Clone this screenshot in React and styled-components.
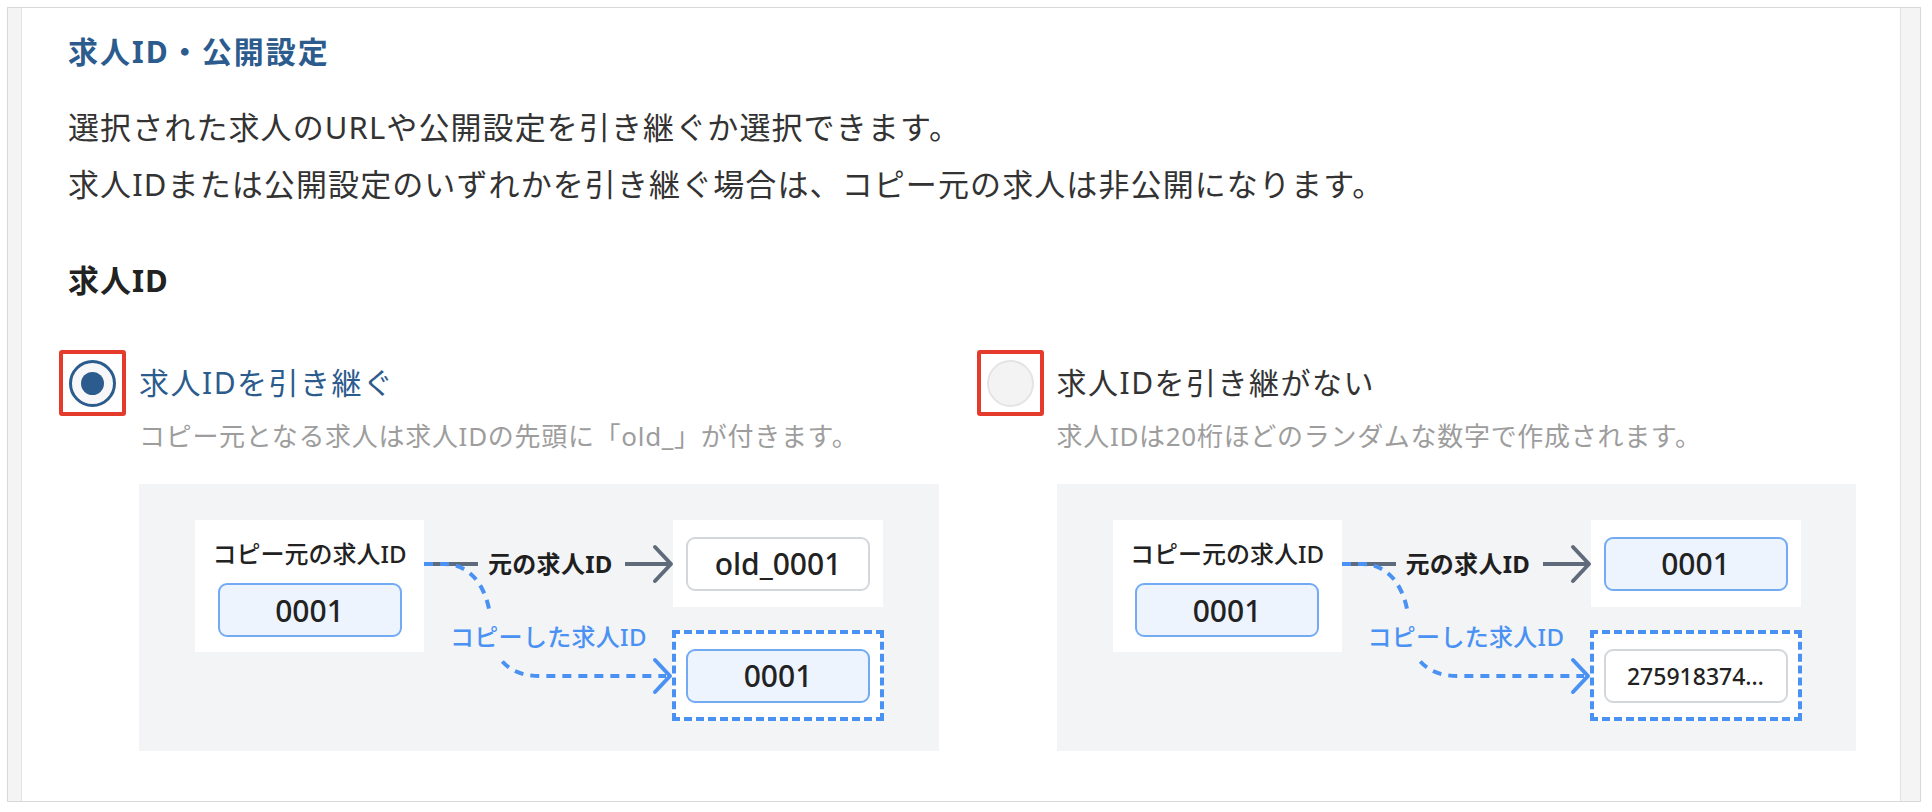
import React from "react";
import styled, { createGlobalStyle } from "styled-components";

const GlobalStyle = createGlobalStyle`
  body {
    margin: 0;
    background: #ffffff;
    font-family: "Noto Sans", "Noto Sans CJK JP", sans-serif;
    color: #333333;
  }
`;

const Frame = styled.div`
  margin: 7px 0 0 7px;
  width: 1914px;
  box-sizing: border-box;
  border: 1px solid #d8d8d8;
  background: #f4f4f4;
  padding: 0 19px 0 13px;
  display: flex;
`;

const Sheet = styled.section`
  flex: 1;
  background: #ffffff;
  border-left: 1px solid #e3e3e3;
  border-right: 1px solid #e3e3e3;
  padding: 22px 44px 50px 46px;
`;

const Heading = styled.h2`
  margin: 0;
  font-size: 30px;
  line-height: 44px;
  font-weight: 700;
  letter-spacing: 2px;
  color: #2c5b8d;
`;

const Lead = styled.p`
  margin: 25px 0 0;
  font-size: 31px;
  line-height: 57px;
  letter-spacing: 1.1px;
  color: #333333;
`;

const SubHeading = styled.h3`
  margin: 45px 0 0;
  font-size: 31px;
  line-height: 44px;
  font-weight: 700;
  letter-spacing: 1px;
  color: #222222;
`;

const Options = styled.div`
  margin: 48px 0 0 -9px;
  display: grid;
  grid-template-columns: 1fr 1fr;
  column-gap: 38px;
`;

const Option = styled.div`
  display: grid;
  grid-template-columns: 67px 1fr;
  column-gap: 13px;
  align-items: center;
`;

const RadioMark = styled.div`
  width: 67px;
  height: 66px;
  box-sizing: border-box;
  border: 4px solid #e53b2c;
  border-radius: 3px;
  display: flex;
  align-items: center;
  justify-content: center;
`;

const RadioCircle = styled.span`
  width: 47px;
  height: 47px;
  box-sizing: border-box;
  border-radius: 50%;
  border: ${p => (p.checked ? "3px solid #2c5b8d" : "2px solid #e4e4e4")};
  background: ${p => (p.checked ? "#f7f7f9" : "#f3f3f3")};
  display: flex;
  align-items: center;
  justify-content: center;

  &::after {
    content: "";
    display: ${p => (p.checked ? "block" : "none")};
    width: 23px;
    height: 23px;
    border-radius: 50%;
    background: #2c5b8d;
  }
`;

const OptionLabel = styled.span`
  font-size: 30px;
  line-height: 66px;
  letter-spacing: 1.5px;
  color: ${p => (p.checked ? "#2c5b8d" : "#333333")};
`;

const OptionNote = styled.div`
  grid-column: 2;
  font-size: 26px;
  line-height: 40px;
  letter-spacing: 0.7px;
  color: #9d9d9d;
`;

const Panel = styled.div`
  grid-column: 2;
  margin-top: 28px;
  height: 267px;
  position: relative;
  background: #f3f4f6;
`;

const Connectors = styled.svg`
  position: absolute;
  left: 0;
  top: 0;
  width: 100%;
  height: 100%;
  overflow: visible;
`;

const SourceCard = styled.div`
  position: absolute;
  left: 56px;
  top: 36px;
  width: 229px;
  height: 132px;
  box-sizing: border-box;
  background: #ffffff;
  padding-top: 17px;
  display: flex;
  flex-direction: column;
  align-items: center;
  gap: 12px;
`;

const CardTitle = styled.div`
  font-size: 24px;
  line-height: 34px;
  font-weight: 500;
  color: #222222;
`;

const TargetCard = styled.div`
  position: absolute;
  left: 534px;
  top: 36px;
  width: 210px;
  height: 87px;
  background: #ffffff;
  display: flex;
  align-items: center;
  justify-content: center;
`;

const CopyBox = styled.div`
  position: absolute;
  left: 533px;
  top: 146px;
  width: 212px;
  height: 91px;
  box-sizing: border-box;
  border: 4px dashed #4a91f4;
  background: #ffffff;
  display: flex;
  align-items: center;
  justify-content: center;
`;

const IdField = styled.div`
  width: 184px;
  height: 54px;
  box-sizing: border-box;
  border-radius: 9px;
  border: 2px solid ${p => (p.tone === "blue" ? "#72abf4" : "#d3d7dc")};
  background: ${p => (p.tone === "blue" ? "#edf4fe" : "#ffffff")};
  display: flex;
  align-items: center;
  justify-content: center;
  font-size: ${p => (p.small ? "23px" : "30px")};
  font-weight: 500;
  color: #222222;
`;

const FlowLabel = styled.div`
  position: absolute;
  left: ${p => p.x}px;
  top: ${p => p.y}px;
  font-size: 24px;
  line-height: ${p => p.lh}px;
  font-weight: ${p => (p.blue ? 500 : 700)};
  color: ${p => (p.blue ? "#4a91f4" : "#1f1f1f")};
  background: ${p => (p.blue ? "#f3f4f6" : "transparent")};
  letter-spacing: 0.3px;
`;

const Diagram = ({ target, copy }) => (
  <Panel>
    <Connectors>
      <line x1="285" y1="80" x2="339" y2="80" stroke="#5f6b7b" strokeWidth="4" />
      <line x1="486" y1="80" x2="530" y2="80" stroke="#5f6b7b" strokeWidth="4" />
      <polyline
        points="516,63 532,80 516,97"
        fill="none"
        stroke="#5f6b7b"
        strokeWidth="4"
        strokeLinecap="round"
        strokeLinejoin="round"
      />
      <path
        d="M285 80 L305 80 C330 80 345 100 350 125 C355 150 354 165 362 176 C372 188 385 192 402 192 L527 192"
        fill="none"
        stroke="#4a91f4"
        strokeWidth="4"
        strokeDasharray="9 7"
      />
      <polyline
        points="516,176 531,192 516,208"
        fill="none"
        stroke="#4a91f4"
        strokeWidth="4"
        strokeLinecap="round"
        strokeLinejoin="round"
      />
    </Connectors>
    <SourceCard>
      <CardTitle>コピー元の求人ID</CardTitle>
      <IdField tone="blue">0001</IdField>
    </SourceCard>
    <FlowLabel x={349} y={63} lh={34}>元の求人ID</FlowLabel>
    <TargetCard>
      <IdField tone={target.tone}>{target.value}</IdField>
    </TargetCard>
    <FlowLabel x={311} y={131} lh={44} blue>
      コピーした求人ID
    </FlowLabel>
    <CopyBox>
      <IdField tone={copy.tone} small={copy.small}>
        {copy.value}
      </IdField>
    </CopyBox>
  </Panel>
);

const options = [
  {
    label: "求人IDを引き継ぐ",
    note: "コピー元となる求人は求人IDの先頭に「old_」が付きます。",
    checked: true,
    target: { tone: "grey", value: "old_0001" },
    copy: { tone: "blue", value: "0001" },
  },
  {
    label: "求人IDを引き継がない",
    note: "求人IDは20桁ほどのランダムな数字で作成されます。",
    checked: false,
    target: { tone: "blue", value: "0001" },
    copy: { tone: "grey", value: "275918374…", small: true },
  },
];

export default function App() {
  return (
    <>
      <GlobalStyle />
      <Frame>
        <Sheet>
          <Heading>求人ID・公開設定</Heading>
          <Lead>
            選択された求人のURLや公開設定を引き継ぐか選択できます。
            <br />
            求人IDまたは公開設定のいずれかを引き継ぐ場合は、コピー元の求人は非公開になります。
          </Lead>
          <SubHeading>求人ID</SubHeading>
          <Options>
            {options.map(o => (
              <Option key={o.label}>
                <RadioMark>
                  <RadioCircle checked={o.checked} />
                </RadioMark>
                <OptionLabel checked={o.checked}>{o.label}</OptionLabel>
                <OptionNote>{o.note}</OptionNote>
                <Diagram target={o.target} copy={o.copy} />
              </Option>
            ))}
          </Options>
        </Sheet>
      </Frame>
    </>
  );
}
